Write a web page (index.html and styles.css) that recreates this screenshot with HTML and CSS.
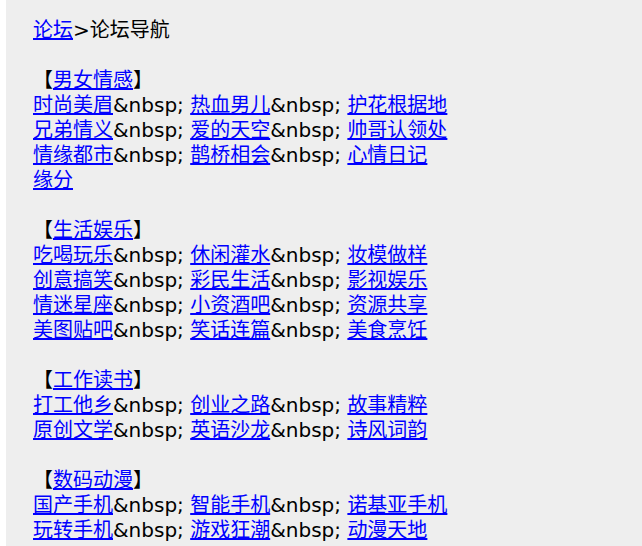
FILE: index.html
```html
<!DOCTYPE html>
<html lang="zh-CN">
<head>
<meta charset="utf-8">
<title>论坛导航</title>
<link rel="stylesheet" href="styles.css">
</head>
<body>
<div class="page">
<a href="#">论坛</a>&gt;论坛导航<br><br>
【<a href="#">男女情感</a>】<br>
<a href="#">时尚美眉</a>&amp;nbsp; <a href="#">热血男儿</a>&amp;nbsp; <a href="#">护花根据地</a><br>
<a href="#">兄弟情义</a>&amp;nbsp; <a href="#">爱的天空</a>&amp;nbsp; <a href="#">帅哥认领处</a><br>
<a href="#">情缘都市</a>&amp;nbsp; <a href="#">鹊桥相会</a>&amp;nbsp; <a href="#">心情日记</a><br>
<a href="#">缘分</a><br><br>
【<a href="#">生活娱乐</a>】<br>
<a href="#">吃喝玩乐</a>&amp;nbsp; <a href="#">休闲灌水</a>&amp;nbsp; <a href="#">妆模做样</a><br>
<a href="#">创意搞笑</a>&amp;nbsp; <a href="#">彩民生活</a>&amp;nbsp; <a href="#">影视娱乐</a><br>
<a href="#">情迷星座</a>&amp;nbsp; <a href="#">小资酒吧</a>&amp;nbsp; <a href="#">资源共享</a><br>
<a href="#">美图贴吧</a>&amp;nbsp; <a href="#">笑话连篇</a>&amp;nbsp; <a href="#">美食烹饪</a><br><br>
【<a href="#">工作读书</a>】<br>
<a href="#">打工他乡</a>&amp;nbsp; <a href="#">创业之路</a>&amp;nbsp; <a href="#">故事精粹</a><br>
<a href="#">原创文学</a>&amp;nbsp; <a href="#">英语沙龙</a>&amp;nbsp; <a href="#">诗风词韵</a><br><br>
【<a href="#">数码动漫</a>】<br>
<a href="#">国产手机</a>&amp;nbsp; <a href="#">智能手机</a>&amp;nbsp; <a href="#">诺基亚手机</a><br>
<a href="#">玩转手机</a>&amp;nbsp; <a href="#">游戏狂潮</a>&amp;nbsp; <a href="#">动漫天地</a>
</div>
</body>
</html>
```
FILE: styles.css
```css
html, body {
  margin: 0;
  padding: 0;
  background: #ffffff;
}
body {
  padding-left: 6px;
}
.page {
  background: #eeeeee;
  min-height: 546px;
  box-sizing: border-box;
  padding: 18px 27px;
  font-family: "DejaVu Sans", Verdana, "Noto Sans CJK SC", sans-serif;
  font-size: 20px;
  line-height: 25px;
  color: #000000;
  white-space: nowrap;
}
.page a {
  color: #0000ff;
  text-decoration: underline;
}
```
